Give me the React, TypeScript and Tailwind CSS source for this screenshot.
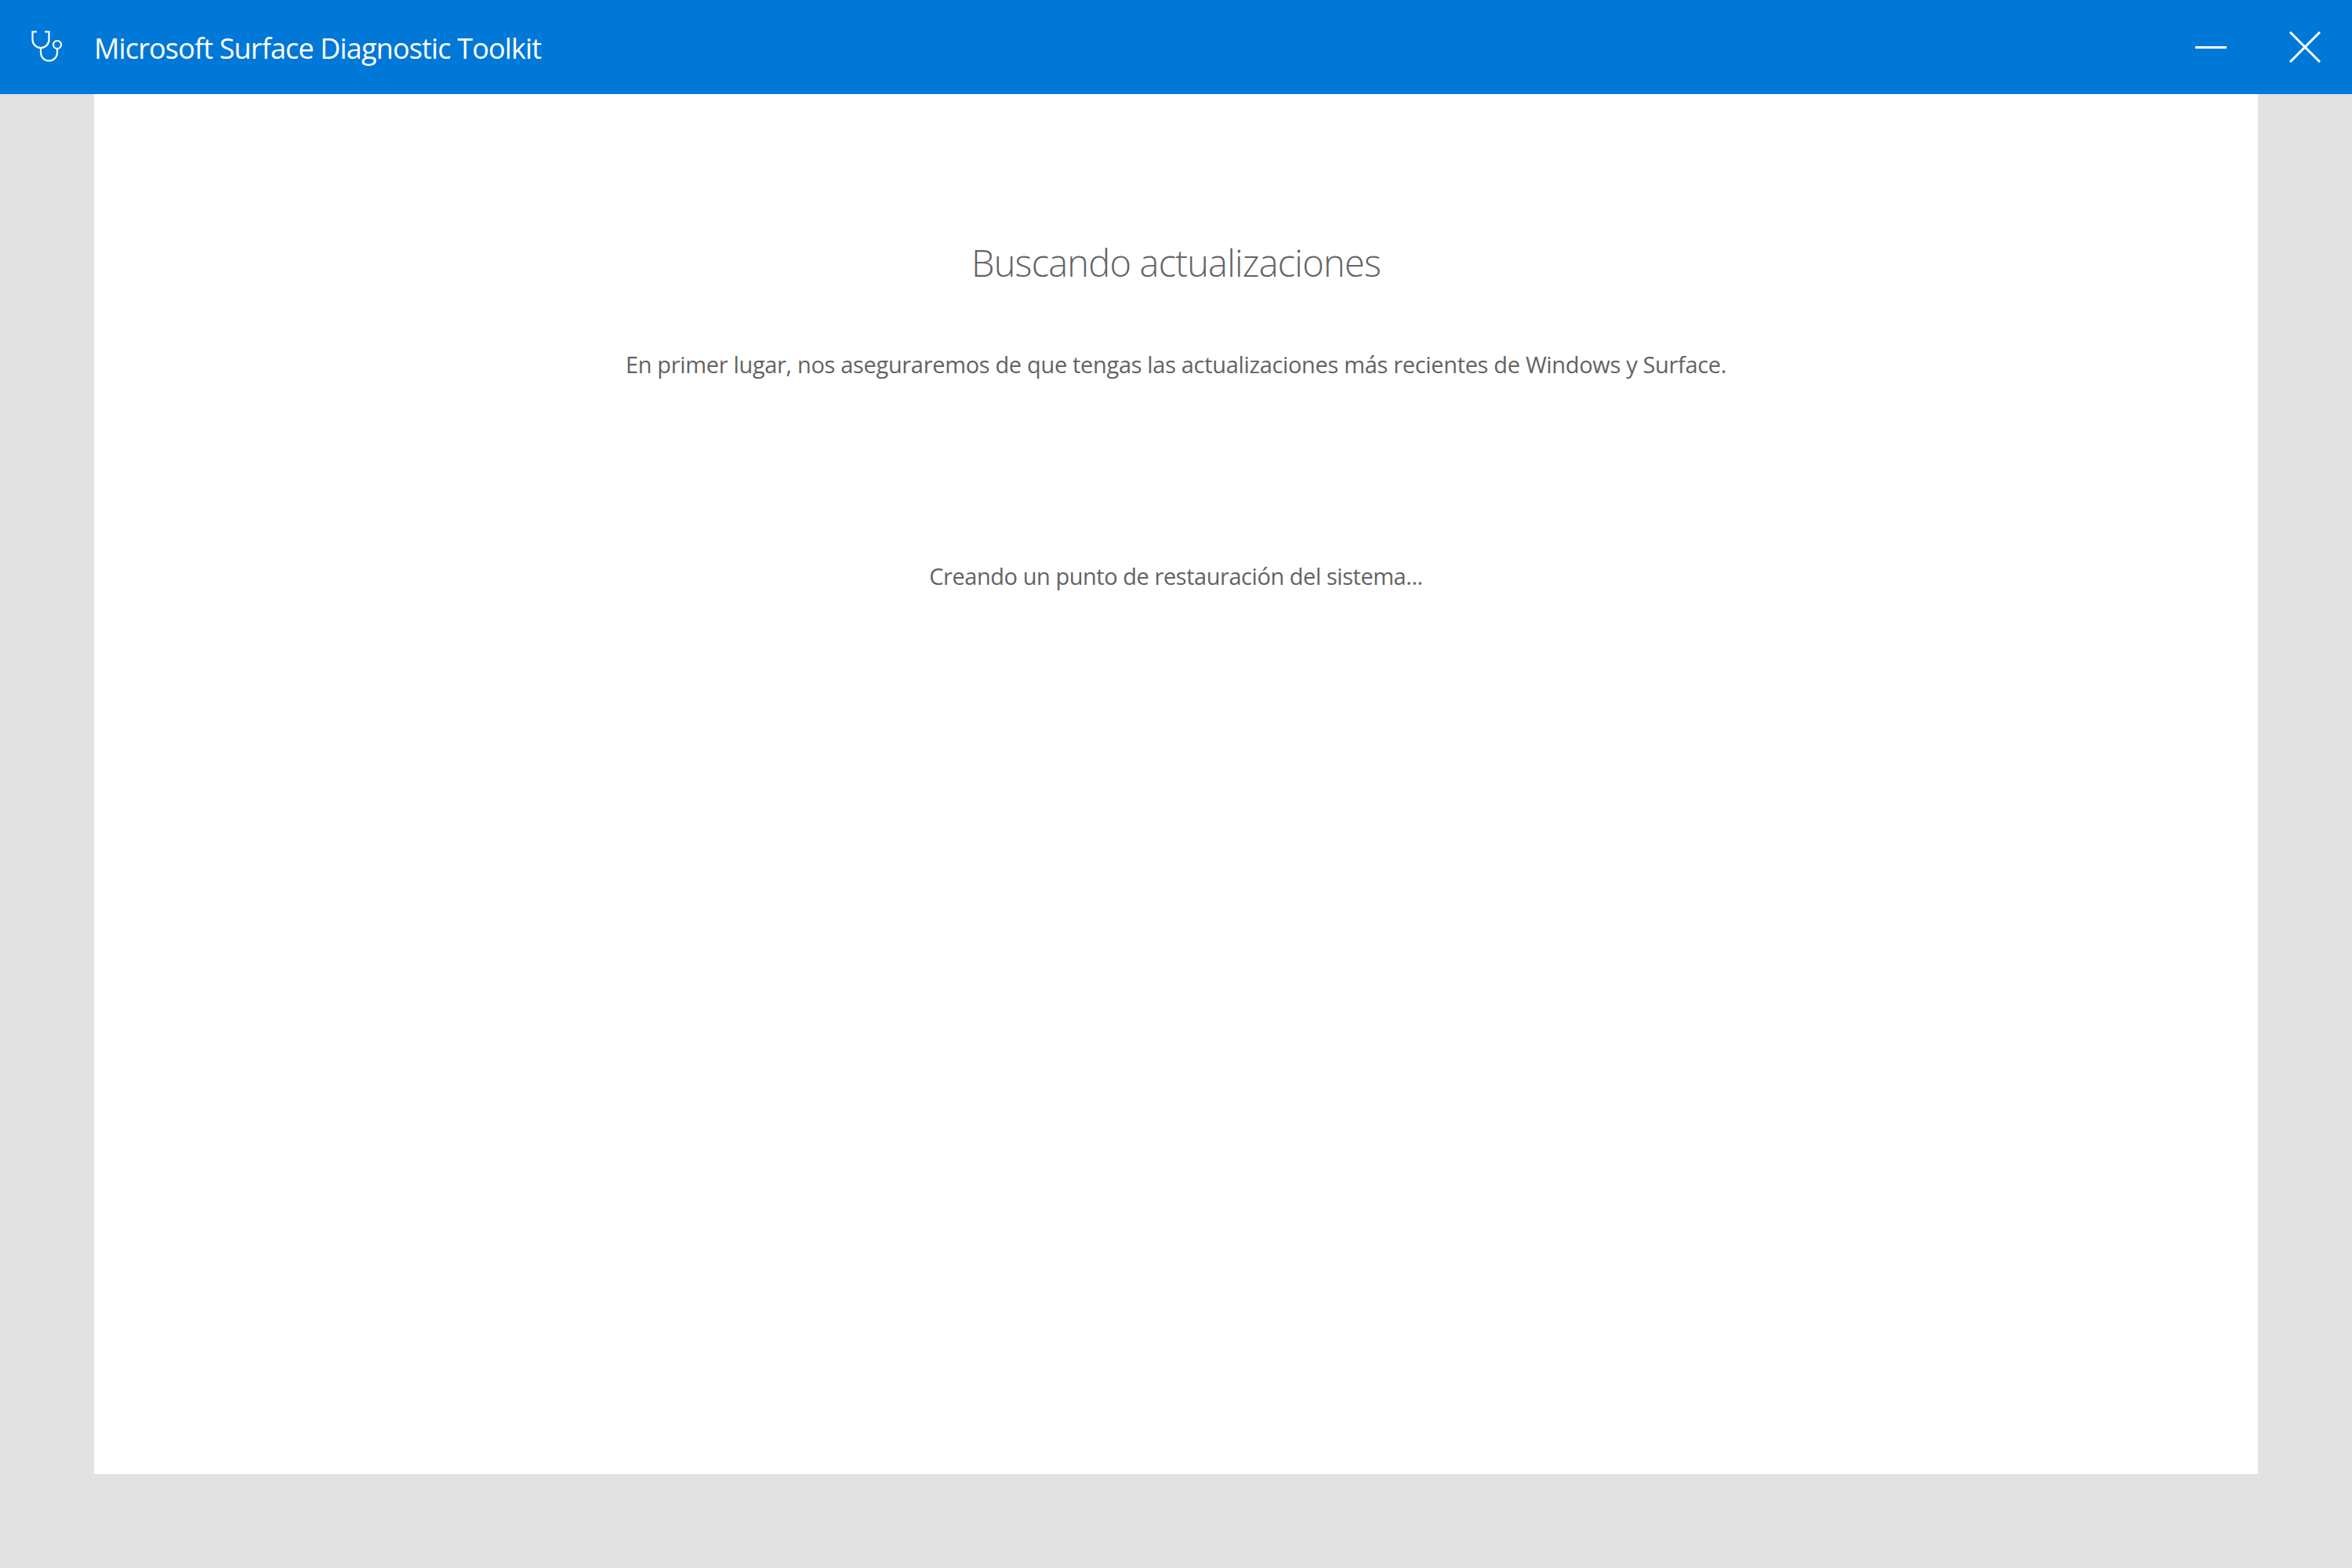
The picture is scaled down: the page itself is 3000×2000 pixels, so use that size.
const font = "font-['Open_Sans',sans-serif]";

function StethoscopeIcon() {
  return (
    <svg width="44" height="42" viewBox="0 0 44 42" fill="none" stroke="white" strokeWidth="2.2">
      <path d="M7 1.5H1.5v10a10.5 10.5 0 0 0 21 0v-10H17" />
      <path d="M12 22v6a10.5 10.5 0 0 0 21 0v-5" />
      <circle cx="33" cy="18" r="5" />
    </svg>
  );
}

export default function App() {
  return (
    <div className={`flex h-[2000px] w-[3000px] flex-col bg-[#e1e1e1] ${font}`}>
      {/* title bar */}
      <header className="flex h-[120px] items-center bg-[#0078d7] text-white">
        <div className="w-[120px] pl-[40px]">
          <StethoscopeIcon />
        </div>
        <h1 className="flex-1 pt-[3px] text-[36px] font-normal tracking-[-0.85px]">Microsoft Surface Diagnostic Toolkit</h1>
        <div className="flex items-center gap-[80px] pr-[40px]">
          <div className="h-[3px] w-[40px] bg-white" />
          <svg width="40" height="40" viewBox="0 0 40 40" stroke="white" strokeWidth="3">
            <path d="M1 1l38 38M39 1L1 39" />
          </svg>
        </div>
      </header>

      <main className="mx-[120px] flex h-[1760px] flex-col items-center bg-white pt-[180px] text-[#636363]">
        <h2 className="text-[47px] leading-[70px] font-light tracking-[-0.8px]">Buscando actualizaciones</h2>
        <p className="mt-[75px] text-[29px] leading-[40px] tracking-[-0.33px]">
          En primer lugar, nos aseguraremos de que tengas las actualizaciones más recientes de Windows y Surface.
        </p>
        <p className="mt-[230px] text-[29px] leading-[40px] tracking-[-0.45px]">Creando un punto de restauración del sistema...</p>
      </main>
    </div>
  );
}
